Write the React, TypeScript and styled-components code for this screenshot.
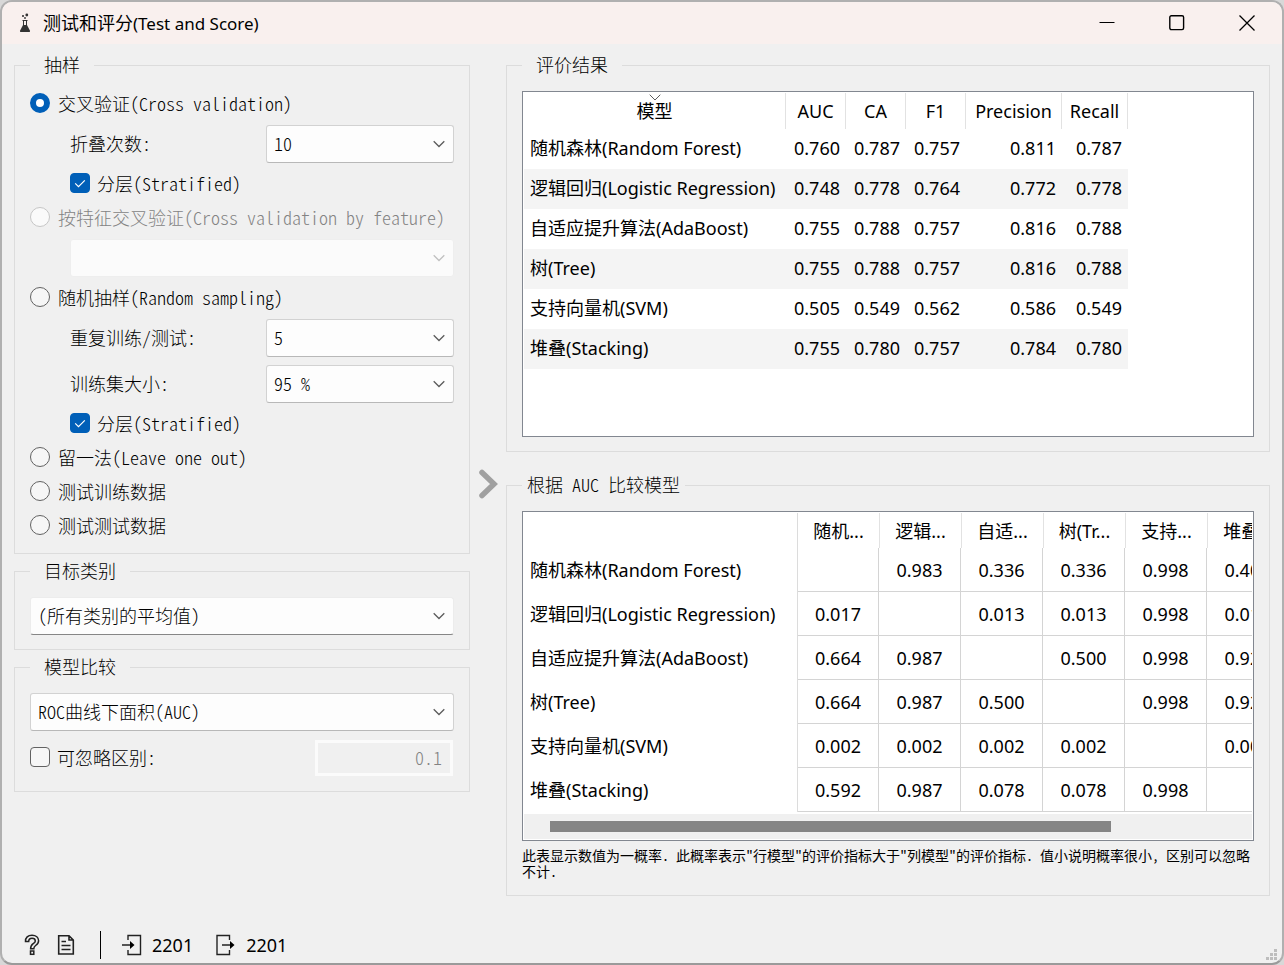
import React, { useId } from "react";
import styled, { createGlobalStyle, css } from "styled-components";

const uiFont = `"Noto Sans", "Noto Sans CJK SC", sans-serif`;
const formFont = `"Noto Sans CJK SC", "Liberation Mono", monospace`;

const GlobalStyle = createGlobalStyle`
  *, *::before, *::after { box-sizing: border-box; }
  body { margin: 0; background: #d8d8d8; color: #000; font-family: ${uiFont}; font-size: 18px; line-height: 24px; }
`;

const halfWidth = css`
  font-family: ${formFont};
  font-feature-settings: "hwid", "liga" 0;
  font-weight: 300;
`;

const Window = styled.main`
  display: flex;
  flex-direction: column;
  min-height: 100vh;
  border: 2px solid #b0b0b0;
  border-bottom-color: #9a9a9a;
  border-radius: 12px;
  background: #f0f0f0;
  overflow: hidden;
`;

const TitleBar = styled.header`
  display: flex;
  align-items: center;
  height: 42px;
  padding-left: 15px;
  background: #f9f0ee;
`;

const Title = styled.h1`
  flex: 1;
  margin: 0 0 0 9px;
  font-size: 18px;
  line-height: 24px;
  font-weight: 400;
`;

const TitleLatin = styled.span`
  font-size: 17px;
`;

const WindowButton = styled.button`
  display: grid;
  place-items: center;
  width: 70px;
  height: 42px;
  padding: 0;
  border: 0;
  background: none;
`;

const Body = styled.div`
  flex: 1;
  display: flex;
  padding: 11px 12px 0;
`;

const Sidebar = styled.div`
  display: flex;
  flex-direction: column;
  gap: 7px;
  width: 456px;
  flex: none;
`;

const Splitter = styled.button`
  display: grid;
  place-items: center;
  width: 36px;
  flex: none;
  padding: 0;
  border: 0;
  background: none;
`;

const Results = styled.div`
  flex: 1;
  min-width: 0;
  display: flex;
  flex-direction: column;
  gap: 23px;
  padding-bottom: 17px;
`;

const Group = styled.fieldset<{ $grow?: boolean }>`
  display: flex;
  flex-direction: column;
  gap: 8px;
  min-width: 0;
  margin: 0;
  padding: 15px 15px 14px;
  border: 1px solid #dcdcdc;
  ${(p) => p.$grow && "flex: 1;"}
`;

const Legend = styled.legend<{ $tight?: boolean }>`
  ${halfWidth}
  padding: 0 ${(p) => (p.$tight ? 5 : 14)}px 2px;
  line-height: 19px;
`;

const ChoiceRow = styled.div<{ $indent?: boolean; $disabled?: boolean }>`
  ${halfWidth}
  display: flex;
  align-items: center;
  gap: ${(p) => (p.$indent ? 7 : 8)}px;
  height: 26px;
  padding: 0 0 2px ${(p) => (p.$indent ? 40 : 0)}px;
  color: ${(p) => (p.$disabled ? "#838383" : "#000")};
`;

const FieldRow = styled.div<{ $indent?: boolean }>`
  ${halfWidth}
  display: flex;
  align-items: center;
  justify-content: space-between;
  height: 38px;
  padding-left: ${(p) => (p.$indent ? 40 : 0)}px;
  & > label { padding-bottom: 2px; }
`;

const CheckLabel = styled.div`
  display: flex;
  align-items: center;
  gap: 7px;
  padding-bottom: 2px;
`;

const RadioInput = styled.input`
  appearance: none;
  flex: none;
  width: 20px;
  height: 20px;
  margin: 0;
  border: 1px solid #626262;
  border-radius: 50%;
  background: #f6f6f6;
  &:checked { border: 6px solid #005fb8; background: #fff; }
  &:disabled { border-color: #c6c6c6; background: #fafafa; }
`;

const CheckFrame = styled.span`
  position: relative;
  display: flex;
  flex: none;
`;

const CheckInput = styled.input`
  appearance: none;
  width: 20px;
  height: 20px;
  margin: 0;
  border: 1px solid #626262;
  border-radius: 4px;
  background: #f6f6f6;
  &:checked { border-color: #005fb8; background: #005fb8; }
  & + svg { display: none; position: absolute; inset: 0; pointer-events: none; }
  &:checked + svg { display: block; }
`;

type ComboVariant = "framed" | "underlined" | "disabled";

const ComboFrame = styled.span<{ $short?: boolean; $variant: ComboVariant }>`
  position: relative;
  display: block;
  width: ${(p) => (p.$short ? "188px" : "100%")};
  color: ${(p) => (p.$variant === "disabled" ? "#c0c0c0" : "#5c5c5c")};
  & > svg { position: absolute; right: 9px; top: 15px; pointer-events: none; }
`;

const ComboSelect = styled.select<{ $variant: ComboVariant }>`
  ${halfWidth}
  appearance: none;
  display: block;
  width: 100%;
  height: 38px;
  padding: 0 30px 2px 7px;
  border: 1px solid #d2d2d2;
  border-bottom-color: #b8b8b8;
  border-radius: 3px;
  background: #fdfdfd;
  color: #000;
  font-size: 18px;
  opacity: 1;
  ${(p) => p.$variant === "underlined" && "border-color: #ececec; border-bottom-color: #868686;"}
  ${(p) => p.$variant === "disabled" && "border-color: #eeeeee; background: #fbfbfb;"}
`;

const NumberInput = styled.input`
  ${halfWidth}
  width: 138px;
  height: 36px;
  margin-right: 1px;
  padding: 0 8px 2px;
  border: 3px solid #fbfbfb;
  border-radius: 0;
  background: #f0f0f0;
  color: #838383;
  font-size: 18px;
  text-align: right;
`;

const Frame = styled.div<{ $grow?: boolean }>`
  min-height: ${(p) => (p.$grow ? "346px" : "330px")};
  padding: 1px;
  border: 1px solid #828790;
  background: #fff;
  overflow: hidden;
  ${(p) => p.$grow && "flex: 1;"}
`;

const TableClip = styled.div`
  overflow: hidden;
  padding-bottom: 2px;
`;

const DataTable = styled.table<{ $width: number }>`
  width: ${(p) => p.$width}px;
  table-layout: fixed;
  border-collapse: separate;
  border-spacing: 0;
  th, td { padding: 0; font-weight: 400; white-space: nowrap; }
`;

const ScoreHead = styled.th`
  position: relative;
  height: 36px;
  border-right: 1px solid #e2e2e2;
  text-align: center;
  & > svg { position: absolute; top: 1px; left: 50%; margin-left: -6px; }
`;

const ScoreRow = styled.tr`
  height: 40px;
  &:nth-child(even) { background: #f4f4f4; }
  && th { padding: 0 0 2px 6px; text-align: left; }
  && td { padding: 0 6px 2px 0; text-align: right; }
`;

const PairHead = styled.th`
  height: 35px;
  border-left: 1px solid #e2e2e2;
  text-align: center;
  &:nth-child(-n + 2) { border-left: 0; }
`;

const PairCorner = styled.td`
  border-right: 1px solid #dcdcdc;
`;

const PairRow = styled.tr`
  height: 44px;
  && th { padding: 0 0 0 6px; border-right: 1px solid #dcdcdc; text-align: left; }
  td { border-right: 1px solid #d4d4d4; border-bottom: 1px solid #d4d4d4; text-align: center; }
`;

const ScrollTrack = styled.div`
  height: 25px;
  padding: 7px 26px;
  background: #f0f0f0;
`;

const ScrollThumb = styled.div`
  width: 83%;
  height: 11px;
  background: #858585;
`;

const Note = styled.p`
  ${halfWidth}
  margin: 0;
  padding-bottom: 2px;
  margin-top: -2px;
  font-size: 14px;
  font-weight: 400;
  line-height: 16px;
`;

const StatusBar = styled.footer`
  display: flex;
  align-items: center;
  height: 50px;
  padding: 14px 4px 0 18px;
`;

const IconButton = styled.button`
  display: grid;
  place-items: center;
  width: 24px;
  height: 24px;
  margin-right: 10px;
  padding: 0;
  border: 0;
  background: none;
`;

const Divider = styled.span`
  width: 1px;
  height: 28px;
  margin: 0 20px 0 12px;
  background: #000;
`;

const Counter = styled.span`
  display: flex;
  align-items: center;
  gap: 9px;
  margin-right: 22px;
`;

const Grip = styled.span`
  display: flex;
  align-self: flex-end;
  margin: 0 0 2px auto;
`;

const Chevron = () => (
  <svg width="12" height="8" viewBox="0 0 12 8" fill="none" stroke="currentColor" strokeWidth="1.3">
    <path d="M.7 1.2 6 6.500l5.300-5.300" />
  </svg>
);

function Radio({ label, checked, disabled }: { label: string; checked?: boolean; disabled?: boolean }) {
  const id = useId();
  return (
    <ChoiceRow $disabled={disabled}>
      <RadioInput type="radio" name="sampling" id={id} defaultChecked={checked} disabled={disabled} />
      <label htmlFor={id}>{label}</label>
    </ChoiceRow>
  );
}

function Check({ label, checked }: { label: string; checked?: boolean }) {
  const id = useId();
  return (
    <>
      <CheckFrame>
        <CheckInput type="checkbox" id={id} defaultChecked={checked} />
        <svg width="20" height="20" viewBox="0 0 20 20" fill="none" stroke="#fff" strokeWidth="1.2">
          <path d="m5.200 10.300 3.300 3.300L14.800 7.300" />
        </svg>
      </CheckFrame>
      <label htmlFor={id}>{label}</label>
    </>
  );
}

interface ComboProps {
  id?: string;
  label?: string;
  value?: string;
  short?: boolean;
  variant?: ComboVariant;
}

function Combo({ id, label, value = "", short, variant = "framed" }: ComboProps) {
  return (
    <ComboFrame $short={short} $variant={variant}>
      <ComboSelect id={id} aria-label={label} $variant={variant} disabled={variant === "disabled"}>
        <option>{value}</option>
      </ComboSelect>
      <Chevron />
    </ComboFrame>
  );
}

function ComboField({ label, value }: { label: string; value: string }) {
  const id = useId();
  return (
    <FieldRow $indent>
      <label htmlFor={id}>{label}</label>
      <Combo id={id} value={value} short />
    </FieldRow>
  );
}

const models = [
  "随机森林(Random Forest)",
  "逻辑回归(Logistic Regression)",
  "自适应提升算法(AdaBoost)",
  "树(Tree)",
  "支持向量机(SVM)",
  "堆叠(Stacking)",
];

const metrics = ["AUC", "CA", "F1", "Precision", "Recall"];

const scores = [
  ["0.760", "0.787", "0.757", "0.811", "0.787"],
  ["0.748", "0.778", "0.764", "0.772", "0.778"],
  ["0.755", "0.788", "0.757", "0.816", "0.788"],
  ["0.755", "0.788", "0.757", "0.816", "0.788"],
  ["0.505", "0.549", "0.562", "0.586", "0.549"],
  ["0.755", "0.780", "0.757", "0.784", "0.780"],
];

const shortNames = ["随机...", "逻辑...", "自适...", "树(Tr...", "支持...", "堆叠..."];

const pairs = [
  ["", "0.983", "0.336", "0.336", "0.998", "0.408"],
  ["0.017", "", "0.013", "0.013", "0.998", "0.013"],
  ["0.664", "0.987", "", "0.500", "0.998", "0.922"],
  ["0.664", "0.987", "0.500", "", "0.998", "0.922"],
  ["0.002", "0.002", "0.002", "0.002", "", "0.002"],
  ["0.592", "0.987", "0.078", "0.078", "0.998", ""],
];

function ScoreTable() {
  return (
    <DataTable $width={604}>
      <colgroup>
        {[262, 60, 60, 60, 96, 66].map((w, i) => (
          <col key={i} width={w} />
        ))}
      </colgroup>
      <thead>
        <tr>
          <ScoreHead scope="col">
            <svg width="12" height="7" viewBox="0 0 12 7" fill="none" stroke="#5c5c5c">
              <path d="M.7.7 6 6l5.300-5.300" />
            </svg>
            模型
          </ScoreHead>
          {metrics.map((m) => (
            <ScoreHead key={m} scope="col">{m}</ScoreHead>
          ))}
        </tr>
      </thead>
      <tbody>
        {models.map((m, r) => (
          <ScoreRow key={m}>
            <th scope="row">{m}</th>
            {scores[r].map((v, c) => (
              <td key={c}>{v}</td>
            ))}
          </ScoreRow>
        ))}
      </tbody>
    </DataTable>
  );
}

function PairTable() {
  return (
    <DataTable $width={765}>
      <colgroup>
        {[274, 81, 82, 82, 82, 82, 82].map((w, i) => (
          <col key={i} width={w} />
        ))}
      </colgroup>
      <thead>
        <tr>
          <PairCorner />
          {shortNames.map((n) => (
            <PairHead key={n} scope="col">{n}</PairHead>
          ))}
        </tr>
      </thead>
      <tbody>
        {models.map((m, r) => (
          <PairRow key={m}>
            <th scope="row">{m}</th>
            {pairs[r].map((v, c) => (
              <td key={c}>{v}</td>
            ))}
          </PairRow>
        ))}
      </tbody>
    </DataTable>
  );
}

export default function App() {
  return (
    <>
      <GlobalStyle />
      <Window>
        <TitleBar>
          <svg width="17" height="20" viewBox="0 0 17 20" fill="none" stroke="#333">
            <path d="M5.500 7.500h5M6.500 7.500v5M9.500 7.500v5" strokeWidth="1" />
            <path d="M6 12h4l3 5.700q.4 1.300-.8 1.300H3.800q-1.200 0-.8-1.300z" fill="#333" stroke="none" />
            <circle cx="6" cy="3" r="1.100" fill="#333" stroke="none" />
            <circle cx="9.800" cy="2" r="1.400" fill="#333" stroke="none" />
            <circle cx="8" cy="5" r=".9" fill="#333" stroke="none" />
          </svg>
          <Title>
            测试和评分<TitleLatin>(Test and Score)</TitleLatin>
          </Title>
          <WindowButton aria-label="最小化">
            <svg width="16" height="16" viewBox="0 0 16 16" stroke="#000">
              <path d="M.5 7.500h15" />
            </svg>
          </WindowButton>
          <WindowButton aria-label="最大化">
            <svg width="16" height="16" viewBox="0 0 16 16" fill="none" stroke="#000" strokeWidth="1.400">
              <rect x=".8" y=".8" width="13.800" height="13.800" rx="1.500" />
            </svg>
          </WindowButton>
          <WindowButton aria-label="关闭">
            <svg width="16" height="16" viewBox="0 0 16 16" stroke="#000" strokeWidth="1.300">
              <path d="m.5.500 15 15m0-15-15 15" />
            </svg>
          </WindowButton>
        </TitleBar>

        <Body>
          <Sidebar>
            <Group>
              <Legend>抽样</Legend>
              <Radio label="交叉验证(Cross validation)" checked />
              <ComboField label="折叠次数:" value="10" />
              <ChoiceRow $indent>
                <Check label="分层(Stratified)" checked />
              </ChoiceRow>
              <Radio label="按特征交叉验证(Cross validation by feature)" disabled />
              <FieldRow $indent>
                <Combo label="特征" variant="disabled" />
              </FieldRow>
              <Radio label="随机抽样(Random sampling)" />
              <ComboField label="重复训练/测试:" value="5" />
              <ComboField label="训练集大小:" value="95 %" />
              <ChoiceRow $indent>
                <Check label="分层(Stratified)" checked />
              </ChoiceRow>
              <Radio label="留一法(Leave one out)" />
              <Radio label="测试训练数据" />
              <Radio label="测试测试数据" />
            </Group>
            <Group>
              <Legend>目标类别</Legend>
              <Combo label="目标类别" value="(所有类别的平均值)" variant="underlined" />
            </Group>
            <Group>
              <Legend>模型比较</Legend>
              <Combo label="模型比较" value="ROC曲线下面积(AUC)" />
              <FieldRow>
                <CheckLabel>
                  <Check label="可忽略区别:" />
                </CheckLabel>
                <NumberInput aria-label="可忽略区别" defaultValue="0.1" disabled />
              </FieldRow>
            </Group>
          </Sidebar>

          <Splitter aria-label="折叠侧栏">
            <svg width="20" height="30" viewBox="0 0 20 30" fill="none" stroke="#a0a0a0" strokeWidth="5.500">
              <path d="M4 3.500 16 15 4 26.500" strokeLinecap="round" />
            </svg>
          </Splitter>

          <Results>
            <Group $grow>
              <Legend>评价结果</Legend>
              <Frame $grow>
                <ScoreTable />
              </Frame>
            </Group>
            <Group>
              <Legend $tight>根据 AUC 比较模型</Legend>
              <Frame>
                <TableClip>
                  <PairTable />
                </TableClip>
                <ScrollTrack>
                  <ScrollThumb />
                </ScrollTrack>
              </Frame>
              <Note>
                此表显示数值为一概率. 此概率表示"行模型"的评价指标大于"列模型"的评价指标. 值小说明概率很小, 区别可以忽略不计.
              </Note>
            </Group>
          </Results>
        </Body>

        <StatusBar>
          <IconButton aria-label="帮助">
            <svg width="16" height="22" viewBox="0 0 16 22" fill="none" stroke="#222" strokeWidth="1.500">
              <path d="M1.500 7.500C1.300 3.500 4 1.200 8 1.200s6.600 2.300 6.600 5.600c0 2.600-1.500 3.700-3 4.700-1.200.8-1.800 1.400-1.800 3.300H6.600c0-3 1-4.100 2.600-5.200 1.300-.9 2.100-1.500 2.100-2.700 0-1.600-1.300-2.700-3.300-2.700-2.100 0-3.300 1.200-3.300 3.300z" />
              <rect x="6.500" y="17" width="3.300" height="3.300" />
            </svg>
          </IconButton>
          <IconButton aria-label="报告">
            <svg width="18" height="22" viewBox="0 0 18 22" fill="none" stroke="#222" strokeWidth="1.600">
              <path d="M1.700 1.700h10.300l4.300 4.300v14H1.700zM12 1.700V6h4.300M4.500 7.500H9M4.500 11.500h9M4.500 15.500h9" />
            </svg>
          </IconButton>
          <Divider />
          <Counter>
            <svg width="22" height="22" viewBox="0 0 22 22" fill="none" stroke="#222" strokeWidth="1.400">
              <path d="M7 6V1.500h12.500v19H7V16M1 11h9" />
              <path d="m9 7 4.500 4L9 15z" fill="#000" stroke="none" />
            </svg>
            2201
          </Counter>
          <Counter>
            <svg width="22" height="22" viewBox="0 0 22 22" fill="none" stroke="#222" strokeWidth="1.400">
              <path d="M14.500 6V1.500H2v19h12.500V16M7 11h9" />
              <path d="m15 7 4.500 4-4.500 4z" fill="#000" stroke="none" />
            </svg>
            2201
          </Counter>
          <Grip>
            <svg width="12" height="12" viewBox="0 0 12 12" fill="#bdbdbd">
              <path d="M8 0h3v3H8zM4 4h3v3H4zM8 4h3v3H8zM0 8h3v3H0zM4 8h3v3H4zM8 8h3v3H8z" />
            </svg>
          </Grip>
        </StatusBar>
      </Window>
    </>
  );
}
